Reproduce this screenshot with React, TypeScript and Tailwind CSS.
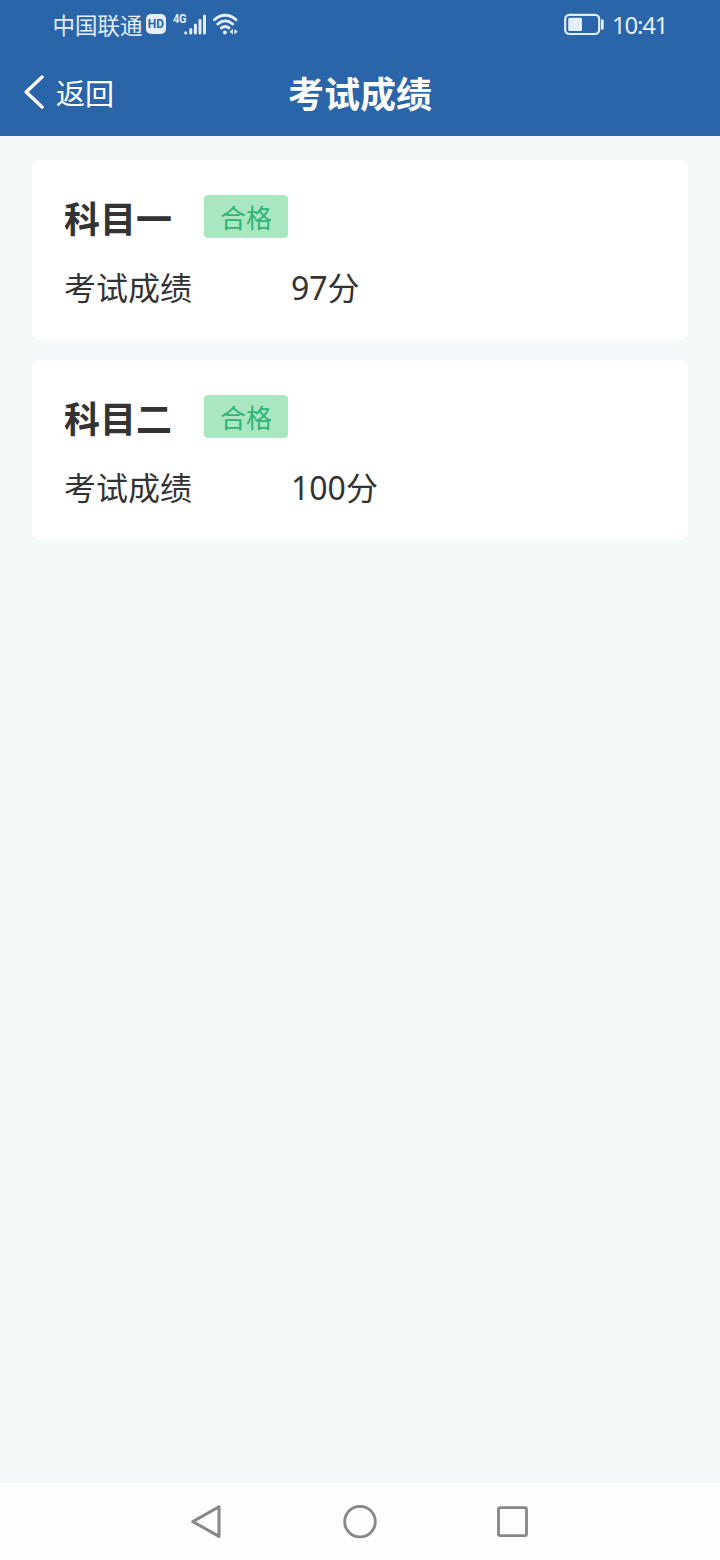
interface Subject {
  name: string
  status: string
  score: number
}

const subjects: Subject[] = [
  { name: '科目一', status: '合格', score: 97 },
  { name: '科目二', status: '合格', score: 100 },
]

function StatusBar() {
  return (
    <div className="flex h-12 items-center justify-between pl-[52.5px] pr-[53px] text-[#e4eefc]">
      <div className="flex h-full items-center">
        <span className="-mt-px w-[93.5px] whitespace-nowrap text-[22.5px] leading-8">中国联通</span>
        <span className="flex h-5 w-5 items-center justify-center rounded-[5px] bg-[#e4eefc] text-[#2b65a9]">
          <span className="scale-y-110 font-['Roboto',sans-serif] text-[12px] font-bold leading-none">HD</span>
        </span>
        <span className="ml-[7px] mt-[-11px] w-[13px] origin-left scale-x-85 whitespace-nowrap font-['Roboto',sans-serif] text-[13px] font-bold leading-none tracking-[-0.3px]">
          4G
        </span>
        <svg width="24" height="24" viewBox="0 0 24 24" className="-ml-1" stroke="currentColor" strokeWidth="3" strokeLinecap="round">
          <path d="M3.7 20.7v.2M8.8 17.4v3.5M13.4 13v7.9M18 8.2v12.7M22.5 3.9v17" />
        </svg>
        <svg width="26" height="24" viewBox="0 0 26 24" className="ml-[6px]" fill="none" stroke="currentColor" strokeWidth="2.9" strokeLinecap="round">
          <path d="M2.4 7.8c6.5-6 15.1-6 21.6 0M5.8 12c4.6-4 10.2-4 14.8 0M9.4 16c2.4-1.8 5.2-1.8 7.6 0" />
          <circle cx="12.9" cy="20.6" r="2" fill="currentColor" stroke="none" />
          <path d="M20.9 17v5.4l-3.3-2.7zM22.4 17v5.4l3.3-2.7z" fill="currentColor" stroke="none" />
        </svg>
      </div>
      <div className="flex items-center">
        <svg width="42" height="24" viewBox="0 0 42 24" fill="none">
          <rect x="3.2" y="2.8" width="34" height="19.2" rx="4.2" stroke="currentColor" strokeWidth="2.2" />
          <rect x="6.2" y="5.8" width="13.8" height="13.2" rx="1.5" fill="currentColor" />
          <path d="M40.4 8.6v8" stroke="currentColor" strokeWidth="2.6" strokeLinecap="round" />
        </svg>
        <span className="ml-[7px] mt-0.5 w-[56px] whitespace-nowrap pl-px font-['Noto_Sans',sans-serif] text-[24px] leading-8 tracking-[-1.2px]">
          10:41
        </span>
      </div>
    </div>
  )
}

function NavBar() {
  return (
    <div className="grid h-[88px] grid-cols-3 items-center text-white">
      <div className="flex items-center pl-6">
        <svg width="20" height="36" viewBox="0 0 20 36" fill="none" stroke="currentColor" strokeWidth="3.4" strokeLinecap="round" strokeLinejoin="round">
          <path d="M18 3 2.2 18 18 33" />
        </svg>
        <span className="ml-3 text-[29px] leading-9">返回</span>
      </div>
      <h1 className="text-center text-[36px] font-bold leading-10">考试成绩</h1>
    </div>
  )
}

function SubjectCard({ name, status, score }: Subject) {
  return (
    <section className="h-[180px] rounded-lg bg-white px-8 pt-[34px]">
      <div className="flex h-11 items-center">
        <h2 className="w-[140px] pt-px text-[36px] font-bold leading-[44px]">{name}</h2>
        <span className="mt-[0.5px] flex h-[43.5px] w-[84px] items-center justify-center rounded bg-[#a9e7c0] pt-px text-[26px] leading-none text-[#2fb377]">
          {status}
        </span>
      </div>
      <div className="mt-6 flex text-[32px] leading-[48px]">
        <span className="w-[227px]">考试成绩</span>
        <span>
          <span className="font-['Noto_Sans',sans-serif]">{score}</span>分
        </span>
      </div>
    </section>
  )
}

function SystemNav() {
  return (
    <footer className="flex h-[77px] items-center justify-center gap-[114px] bg-[#fdfdfd] text-[#878787]">
      <svg width="40" height="40" viewBox="0 0 40 40" fill="none" stroke="currentColor" strokeWidth="3" strokeLinejoin="round">
        <path d="M6.8 19.6 33 4.8v29.6z" />
      </svg>
      <svg width="40" height="40" viewBox="0 0 40 40" fill="none" stroke="currentColor" strokeWidth="2.8">
        <circle cx="20" cy="19.6" r="15.3" />
      </svg>
      <svg width="40" height="40" viewBox="0 0 40 40" fill="none" stroke="currentColor" strokeWidth="2.8">
        <rect x="4.5" y="5.6" width="28" height="28" rx="1.5" />
      </svg>
    </footer>
  )
}

export default function App() {
  return (
    <div className="flex h-[1560px] w-[720px] flex-col bg-[#f4f9fa] font-['Noto_Sans_CJK_SC',sans-serif] text-[#333333]">
      <header className="bg-[#2b65a9]">
        <StatusBar />
        <NavBar />
      </header>
      <main className="flex flex-1 flex-col gap-5 px-8 pt-6">
        {subjects.map((s) => (
          <SubjectCard key={s.name} {...s} />
        ))}
      </main>
      <SystemNav />
    </div>
  )
}
